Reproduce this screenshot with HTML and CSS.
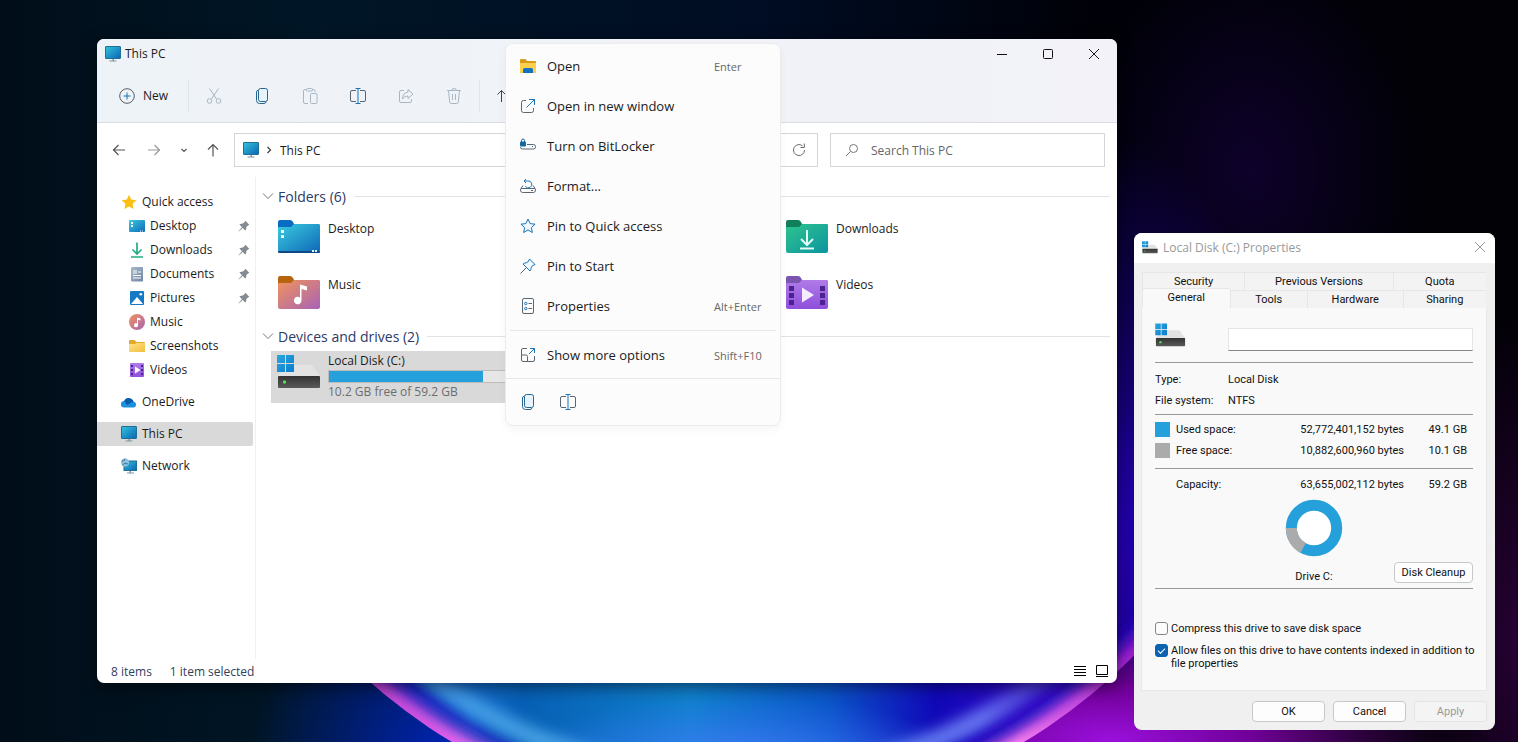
FILE: index.html
```html
<!DOCTYPE html>
<html lang="en">
<head>
    <meta charset="UTF-8">
    <meta name="viewport" content="width=device-width, initial-scale=1.0">
    <title>This PC</title>
    <link rel="stylesheet" href="styles.css">
</head>
<body>
    <!-- Shared icons and gradients -->
    <svg class="defs" width="0" height="0" aria-hidden="true">
        <defs>
            <linearGradient id="g-screen" x1="0" y1="0" x2="1" y2="1"><stop offset="0" stop-color="#33c5dc"/><stop offset="1" stop-color="#0a63b5"/></linearGradient>
            <linearGradient id="g-desktop" x1="0" y1="0" x2="1" y2="1"><stop offset="0" stop-color="#3ccbe0"/><stop offset="1" stop-color="#0d68b8"/></linearGradient>
            <linearGradient id="g-music" x1="0" y1="0" x2="1" y2="1"><stop offset="0" stop-color="#f2935c"/><stop offset="1" stop-color="#a763b5"/></linearGradient>
            <linearGradient id="g-down" x1="0" y1="0" x2="1" y2="1"><stop offset="0" stop-color="#2fc48d"/><stop offset="1" stop-color="#0b94a0"/></linearGradient>
            <linearGradient id="g-video" x1="0" y1="0" x2="0" y2="1"><stop offset="0" stop-color="#b07be8"/><stop offset="1" stop-color="#8f4fdb"/></linearGradient>
            <linearGradient id="g-doc" x1="0" y1="0" x2="1" y2="1"><stop offset="0" stop-color="#a9b9cc"/><stop offset="1" stop-color="#6f86a3"/></linearGradient>
            <linearGradient id="g-folder" x1="0" y1="0" x2="1" y2="1"><stop offset="0" stop-color="#ffe38a"/><stop offset="1" stop-color="#f2bf3c"/></linearGradient>
            <linearGradient id="g-win" x1="0" y1="0" x2="1" y2="1"><stop offset="0" stop-color="#2ba7df"/><stop offset="1" stop-color="#0d7ccb"/></linearGradient>
            <linearGradient id="g-disk" x1="0" y1="0" x2="0" y2="1"><stop offset="0" stop-color="#333"/><stop offset="1" stop-color="#5a5a5a"/></linearGradient>
            <symbol id="i-pc" viewBox="0 0 16 16">
                <rect x="0.5" y="0.5" width="15" height="12" rx="0.5" fill="url(#g-screen)" stroke="#1f6f96"/>
                <path d="M7.5 13h1.500v1.500h-1.500zM4.500 14.500h7v1h-7z" fill="#8296a3"/>
            </symbol>
            <symbol id="i-copy" viewBox="0 0 16 16">
                <rect x="4.500" y="0.500" width="9" height="13" rx="2" fill="#e6f4fd" stroke="#27658f"/>
                <path d="M4 2.200Q2.500 2.700 2.500 4v8.500q0 3 3 3H10q1.500 0 2-1.500" fill="none" stroke="#27658f"/>
            </symbol>
            <symbol id="i-rename" viewBox="0 0 16 16">
                <path d="M6 2.500H2q-1.500 0-1.500 1.500v8q0 1.500 1.500 1.500h4M10 2.500h4q1.500 0 1.500 1.500v8q0 1.500-1.500 1.500h-4" fill="none" stroke="#596673"/>
                <path d="M8 .5v15M5.500.5h5M5.500 15.500h5" fill="none" stroke="#1873b8"/>
            </symbol>
            <symbol id="i-pin" viewBox="0 0 12 12">
                <path d="M7.300.8l4 4-1.300.6-1.600 1.700-.3 2.700-.9.600L4.800 8 .8 11.500.5 11.200 4 7.200 1.600 4.800l.6-.9 2.700-.3L6.600 2z" fill="#858b93"/>
            </symbol>
            <symbol id="i-disk" viewBox="0 0 44 36">
                <path d="M17 12h18l8 11H1l3-4h13z" fill="#e3e3e3"/>
                <rect x="1" y="23" width="42" height="12" rx="1" fill="url(#g-disk)"/>
                <circle cx="7.500" cy="29" r="1.700" fill="#4fe04f"/>
                <path d="M0 2h8v8H0zM9 2h8v8H9zM0 11h8v8H0zM9 11h8v8H9z" fill="url(#g-win)"/>
            </symbol>
            <symbol id="i-close" viewBox="0 0 12 12">
                <path d="M1 1l10 10M11 1L1 11" fill="none" stroke="currentColor"/>
            </symbol>
        </defs>
    </svg>

    <!-- Wallpaper -->
    <svg class="wallpaper" viewBox="0 0 1518 742" preserveAspectRatio="xMidYMid slice" aria-hidden="true">
        <defs>
            <linearGradient id="w-base"><stop offset="0" stop-color="#010e19"/><stop offset="0.2" stop-color="#001626"/><stop offset="0.5" stop-color="#000d24"/><stop offset="0.72" stop-color="#000108"/><stop offset="1" stop-color="#020106"/></linearGradient>
            <radialGradient id="w-blue"><stop offset="0" stop-color="#0026c4"/><stop offset="1" stop-color="#0026c4" stop-opacity="0"/></radialGradient>
            <radialGradient id="w-deep"><stop offset="0" stop-color="#2200b0"/><stop offset="1" stop-color="#2200b0" stop-opacity="0"/></radialGradient>
            <radialGradient id="w-violet"><stop offset="0" stop-color="#220060" stop-opacity="0.4"/><stop offset="1" stop-color="#220060" stop-opacity="0"/></radialGradient>
            <radialGradient id="w-plum"><stop offset="0" stop-color="#300040" stop-opacity="0.8"/><stop offset="1" stop-color="#300040" stop-opacity="0"/></radialGradient>
            <radialGradient id="w-purple"><stop offset="0" stop-color="#9a10dc"/><stop offset="0.4" stop-color="#700098"/><stop offset="1" stop-color="#400050" stop-opacity="0"/></radialGradient>
            <linearGradient id="w-orb" gradientUnits="userSpaceOnUse" x1="371" y1="0" x2="1134" y2="0"><stop offset="0" stop-color="#1018b0"/><stop offset="0.13" stop-color="#1468c8"/><stop offset="0.2" stop-color="#065fb4"/><stop offset="0.42" stop-color="#1080cc"/><stop offset="0.6" stop-color="#0a55c8"/><stop offset="0.74" stop-color="#1008b8"/><stop offset="0.9" stop-color="#3a0ac8"/><stop offset="1" stop-color="#2200a8"/></linearGradient>
            <linearGradient id="w-ring" gradientUnits="userSpaceOnUse" x1="371" y1="0" x2="1134" y2="0"><stop offset="0" stop-color="#c040d0"/><stop offset="0.12" stop-color="#f062f0"/><stop offset="0.85" stop-color="#ff80f0"/><stop offset="1" stop-color="#a01cd0"/></linearGradient>
            <linearGradient id="w-streak" gradientUnits="userSpaceOnUse" x1="371" y1="0" x2="1134" y2="0"><stop offset="0" stop-color="#40a0e8" stop-opacity="0.8"/><stop offset="0.25" stop-color="#58b0f0" stop-opacity="0.8"/><stop offset="0.8" stop-color="#7a90ff" stop-opacity="0.8"/><stop offset="1" stop-color="#2200a8" stop-opacity="0"/></linearGradient>
            <radialGradient id="w-glow"><stop offset="0" stop-color="#4f80ff"/><stop offset="1" stop-color="#3a78ff" stop-opacity="0"/></radialGradient>
            <linearGradient id="w-fade" x1="0" y1="0" x2="0" y2="1"><stop offset="0.55" stop-color="#000"/><stop offset="0.88" stop-color="#fff"/></linearGradient>
            <mask id="w-mask"><rect width="1518" height="742" fill="url(#w-fade)"/></mask>
            <clipPath id="w-clip"><circle cx="738" cy="264" r="557"/></clipPath>
            <filter id="w-blur"><feGaussianBlur stdDeviation="7"/></filter>
        </defs>
        <rect width="1518" height="742" fill="url(#w-base)"/>
        <ellipse cx="460" cy="770" rx="210" ry="210" fill="url(#w-blue)"/>
        <ellipse cx="1250" cy="170" rx="170" ry="220" fill="url(#w-violet)"/>
        <ellipse cx="1120" cy="540" rx="170" ry="400" fill="url(#w-deep)"/>
        <ellipse cx="1518" cy="640" rx="90" ry="330" fill="url(#w-plum)"/>
        <ellipse cx="1110" cy="740" rx="360" ry="130" fill="url(#w-purple)"/>
        <g mask="url(#w-mask)">
            <g clip-path="url(#w-clip)">
                <rect width="1518" height="742" fill="url(#w-orb)"/>
                <ellipse cx="740" cy="775" rx="240" ry="80" fill="url(#w-glow)"/>
                <circle cx="738" cy="264" r="516" fill="none" stroke="url(#w-streak)" stroke-width="20" filter="url(#w-blur)"/>
                <circle cx="738" cy="264" r="539" fill="none" stroke="#1a08c0" stroke-width="10" filter="url(#w-blur)"/>
                <circle cx="738" cy="264" r="558" fill="none" stroke="url(#w-ring)" stroke-width="26" filter="url(#w-blur)"/>
            </g>
        </g>
    </svg>

    <!-- File Explorer -->
    <main class="explorer">
        <header class="titlebar">
            <svg class="icon16"><use href="#i-pc"/></svg>
            <h1>This PC</h1>
            <div class="window-controls">
                <button aria-label="Minimize"><svg viewBox="0 0 12 12"><path d="M1 6.500h10" fill="none" stroke="#111"/></svg></button>
                <button aria-label="Maximize"><svg viewBox="0 0 12 12"><rect x="1.500" y="1.500" width="9" height="9" rx="1" fill="none" stroke="#111"/></svg></button>
                <button aria-label="Close"><svg><use href="#i-close"/></svg></button>
            </div>
        </header>

        <div class="toolbar">
            <button class="new-btn">
                <svg class="icon16" viewBox="0 0 16 16"><circle cx="8" cy="8" r="7.300" fill="none" stroke="#555c63"/><path d="M8 4.500v7M4.500 8h7" fill="none" stroke="#1873b8"/></svg>
                New
            </button>
            <span class="divider"></span>
            <button class="tool" aria-label="Cut" disabled><svg viewBox="0 0 16 16"><g fill="none" stroke="#a9b6c4"><path d="M3.500.5l7 10.500M12.500.5l-7 10.500"/><circle cx="3.500" cy="13" r="2.300"/><circle cx="12.500" cy="13" r="2.300"/></g></svg></button>
            <button class="tool" aria-label="Copy"><svg><use href="#i-copy"/></svg></button>
            <button class="tool" aria-label="Paste" disabled><svg viewBox="0 0 16 16"><g fill="none" stroke="#a9b6c4"><path d="M5 1.500H3Q1.500 1.500 1.500 3v11q0 1.500 1.500 1.500h3M10 1.500h1.500Q13 1.500 13 3v1"/><rect x="4.500" y=".5" width="6" height="2.500" rx="1"/><rect x="8.500" y="5.500" width="6.500" height="10" rx="1"/></g></svg></button>
            <button class="tool" aria-label="Rename"><svg><use href="#i-rename"/></svg></button>
            <button class="tool" aria-label="Share" disabled><svg viewBox="0 0 16 16"><g fill="none" stroke="#a9b6c4"><path d="M6 2.500H3Q1.500 2.500 1.500 4v9q0 1.500 1.500 1.500h9q1.500 0 1.500-1.500v-2"/><path d="M10 1.500l5 4.500-5 4.500V8Q6.500 7.500 4.500 11q0-6 5.500-7z"/></g></svg></button>
            <button class="tool" aria-label="Delete" disabled><svg viewBox="0 0 16 16"><g fill="none" stroke="#a9b6c4"><path d="M1 2.500h14M5.500 2.500Q5.500.5 8 .5t2.500 2M2.500 2.500l1.200 11.500q.2 1.500 1.600 1.500h5.400q1.400 0 1.600-1.500l1.200-11.500M6.500 6v6M9.500 6v6"/></g></svg></button>
            <span class="divider"></span>
            <button class="tool" aria-label="Sort"><svg viewBox="0 0 16 16"><path d="M4.500 14V2.500M.5 6.500l4-4 4 4" fill="none" stroke="#444"/></svg></button>
        </div>

        <div class="address-row">
            <nav class="nav-buttons" aria-label="History">
                <button aria-label="Back"><svg viewBox="0 0 14 14"><path d="M13 7H1.500M6.500 2l-5 5 5 5" fill="none" stroke="#555" stroke-width="1.200"/></svg></button>
                <button aria-label="Forward"><svg viewBox="0 0 14 14"><path d="M1 7h11.500M7.500 2l5 5-5 5" fill="none" stroke="#9a9a9a" stroke-width="1.200"/></svg></button>
                <button class="recent" aria-label="Recent locations"><svg viewBox="0 0 14 14"><path d="M4.500 6L7 8.500 9.500 6" fill="none" stroke="#555" stroke-width="1.200"/></svg></button>
                <button class="up" aria-label="Up"><svg viewBox="0 0 14 14"><path d="M7 13.500V1.500M2 6.500l5-5 5 5" fill="none" stroke="#555" stroke-width="1.200"/></svg></button>
            </nav>
            <div class="address">
                <svg class="icon16"><use href="#i-pc"/></svg>
                <svg class="crumb" viewBox="0 0 8 8"><path d="M2.500 1l3 3-3 3" fill="none" stroke="#444" stroke-width="1.300"/></svg>
                <span>This PC</span>
                <button aria-label="Refresh"><svg viewBox="0 0 14 14"><path d="M12.500 7A5.500 5.500 0 1 1 10.500 2.800M12.300.5v4H8.500" fill="none" stroke="#6b6b6b"/></svg></button>
            </div>
            <div class="search">
                <svg viewBox="0 0 14 14"><circle cx="8.500" cy="5.500" r="4" fill="none" stroke="#777"/><path d="M5.500 8.500L1 13" stroke="#777"/></svg>
                <input type="search" placeholder="Search This PC" aria-label="Search This PC">
            </div>
        </div>

        <div class="panes">
            <nav class="sidebar" aria-label="Folders">
                <a href="#" class="row">
                    <svg class="icon16" viewBox="0 0 16 16"><path d="M8 .8l2.200 4.700 5.100.7-3.700 3.600.9 5.100L8 12.400l-4.500 2.500.9-5.100L.7 6.200l5.100-.7z" fill="#fcbf12"/></svg>
                    Quick access
                </a>
                <a href="#" class="row sub">
                    <svg class="icon16" viewBox="0 0 16 16"><rect y="2" width="16" height="12" rx="1" fill="url(#g-desktop)"/><path d="M2 4h2v2H2zM2 7h2v2H2zM11 12.500h1v1h-1zM13 12.500h1v1h-1z" fill="#fff"/></svg>
                    Desktop <svg class="pin"><use href="#i-pin"/></svg>
                </a>
                <a href="#" class="row sub">
                    <svg class="icon16" viewBox="0 0 16 16"><path d="M8 .5v11M3.500 7.500L8 12l4.500-4.500M2 15h12" fill="none" stroke="#22ad83" stroke-width="1.700"/></svg>
                    Downloads <svg class="pin"><use href="#i-pin"/></svg>
                </a>
                <a href="#" class="row sub">
                    <svg class="icon16" viewBox="0 0 16 16"><rect x="2" y="1" width="12" height="14.500" rx="1" fill="url(#g-doc)"/><path d="M4 5h4M4 7h4M4 9.500h8M4 12h8M9 6h3" stroke="#fff"/></svg>
                    Documents <svg class="pin"><use href="#i-pin"/></svg>
                </a>
                <a href="#" class="row sub">
                    <svg class="icon16" viewBox="0 0 16 16"><rect x="1" y="1" width="14" height="14" rx="1" fill="#1679c4"/><path d="M2 14l6-7 6 7z" fill="#fff"/><circle cx="11.800" cy="4.200" r="1.300" fill="#fff"/></svg>
                    Pictures <svg class="pin"><use href="#i-pin"/></svg>
                </a>
                <a href="#" class="row sub">
                    <svg class="icon16" viewBox="0 0 16 16"><circle cx="8" cy="8" r="8" fill="url(#g-music)"/><path d="M8 11V3.500l3.500 1v2L9 5.800V11a2 2 0 1 1-1-1.500z" fill="#fff"/></svg>
                    Music
                </a>
                <a href="#" class="row sub">
                    <svg class="icon16" viewBox="0 0 16 16"><path d="M0 3q0-1 1-1h4.500l2 2H15q1 0 1 1v8q0 1-1 1H1q-1 0-1-1z" fill="#e3a92c"/><path d="M0 6h6l1.500-1H16v8q0 1-1 1H1q-1 0-1-1z" fill="url(#g-folder)"/></svg>
                    Screenshots
                </a>
                <a href="#" class="row sub">
                    <svg class="icon16" viewBox="0 0 16 16"><rect x="1" y="1" width="14" height="14" rx="1" fill="url(#g-video)"/><path d="M2 3h2v2H2zM2 7h2v2H2zM2 11h2v2H2zM12 3h2v2h-2zM12 7h2v2h-2zM12 11h2v2h-2z" fill="#4b2391"/><path d="M6 4.500v7L11.500 8z" fill="#fff"/></svg>
                    Videos
                </a>
                <a href="#" class="row top">
                    <svg class="icon16" viewBox="0 0 16 16"><path d="M3 13.500a3.200 3.200 0 0 1 .2-6.400 5 5 0 0 1 9.300.4A3.100 3.100 0 0 1 13 13.500z" fill="#1f8fe0"/><path d="M3.200 7.100a5 5 0 0 1 9.300.4L6 11z" fill="#0b5cab"/></svg>
                    OneDrive
                </a>
                <a href="#" class="row top selected">
                    <svg class="icon16"><use href="#i-pc"/></svg>
                    This PC
                </a>
                <a href="#" class="row top">
                    <svg class="icon16" viewBox="0 0 16 16"><rect x="3" y="3" width="12.500" height="9.500" fill="url(#g-screen)" stroke="#1f6f96"/><path d="M8.500 13h1.500v1.500H8.500zM6 14.500h7v1H6z" fill="#8296a3"/><circle cx="4" cy="4.500" r="4" fill="#8fc0dd"/><path d="M1 3q2 1 3-2.500M1.500 7q2-3 5.500-1" fill="none" stroke="#37799f"/></svg>
                    Network
                </a>
            </nav>

            <section class="content">
                <h2>
                    <svg viewBox="0 0 12 12"><path d="M1 3.500l5 5 5-5" fill="none" stroke="#777"/></svg>
                    Folders (6)
                </h2>
                <div class="tiles">
                    <a href="#" class="tile">
                        <svg viewBox="0 0 44 36"><path d="M1 3q0-2 2-2h10q2 0 3 2l1 2h24q2 0 2 2v8H1z" fill="#0a6cc0"/><path d="M1 9q0-1 1-1h12l3-3h24q2 0 2 2v24q0 2-2 2H3q-2 0-2-2z" fill="url(#g-desktop)"/><path d="M1 32h42v1q0 1-1 1H2q-1 0-1-1z" fill="#0b4a86"/><path d="M4 11h3v3H4zM4 16h3v3H4zM35 31h2v2h-2zM38 31h2v2h-2z" fill="#e8fbff"/></svg>
                        Desktop
                    </a>
                    <a href="#" class="tile third">
                        <svg viewBox="0 0 44 36"><path d="M1 3q0-2 2-2h10q2 0 3 2l1 2h24q2 0 2 2v8H1z" fill="#0f7f5c"/><path d="M1 9q0-1 1-1h12l3-3h24q2 0 2 2v25q0 2-2 2H3q-2 0-2-2z" fill="url(#g-down)"/><path d="M22 11v14M16 20l6 6 6-6M15 29.500h14" fill="none" stroke="#dffcf4" stroke-width="2"/></svg>
                        Downloads
                    </a>
                    <a href="#" class="tile">
                        <svg viewBox="0 0 44 36"><path d="M1 3q0-2 2-2h10q2 0 3 2l1 2h24q2 0 2 2v8H1z" fill="#b8640f"/><path d="M1 9q0-1 1-1h12l3-3h24q2 0 2 2v25q0 2-2 2H3q-2 0-2-2z" fill="url(#g-music)"/><path d="M23 25V9.500l7 2v4l-5.500-1.500V25.500a3.800 3.800 0 1 1-1.500-3z" fill="#fff"/></svg>
                        Music
                    </a>
                    <a href="#" class="tile third">
                        <svg viewBox="0 0 44 36"><path d="M1 3q0-2 2-2h10q2 0 3 2l1 2h24q2 0 2 2v8H1z" fill="#7a56b0"/><path d="M1 9q0-1 1-1h12l3-3h24q2 0 2 2v25q0 2-2 2H3q-2 0-2-2z" fill="url(#g-video)"/><path d="M4 11h5v5H4zM4 18h5v5H4zM4 25h5v5H4zM35 11h5v5h-5zM35 18h5v5h-5zM35 25h5v5h-5z" fill="#4b2391"/><path d="M17 12.500v15L29 20z" fill="#f5edff"/></svg>
                        Videos
                    </a>
                </div>
                <h2>
                    <svg viewBox="0 0 12 12"><path d="M1 3.500l5 5 5-5" fill="none" stroke="#777"/></svg>
                    Devices and drives (2)
                </h2>
                <div class="tiles">
                    <a href="#" class="tile drive">
                        <svg><use href="#i-disk"/></svg>
                        <span class="drive-info">
                            <span>Local Disk (C:)</span>
                            <span class="usage"><span class="used" style="width: 83%"></span></span>
                            <span class="free">10.2 GB free of 59.2 GB</span>
                        </span>
                    </a>
                </div>
            </section>
        </div>

        <footer class="statusbar">
            <span>8 items</span>
            <span>1 item selected</span>
            <div class="view-buttons">
                <button aria-label="Details view"><svg viewBox="0 0 12 12"><path d="M0 1.500h12M0 4.500h12M0 7.500h12M0 10.500h12" stroke="#000"/></svg></button>
                <button aria-label="Large icons view"><svg viewBox="0 0 12 12"><path d="M.5.500h11v9H.500zM0 11.500h12" fill="none" stroke="#000"/></svg></button>
            </div>
        </footer>
    </main>

    <!-- Context menu -->
    <div class="menu" role="menu">
        <button class="item" role="menuitem">
            <svg viewBox="0 0 16 16"><path d="M0 2q0-1 1-1h4.500L7 3h8q1 0 1 1v10q0 1-1 1H1q-1 0-1-1z" fill="#d99b1c"/><path d="M0 5h16v9q0 1-1 1H1q-1 0-1-1z" fill="#fccf4d"/><path d="M3 15v-3.500q0-1.500 1.500-1.500h7q1.500 0 1.500 1.500V15z" fill="#1672c0"/></svg>
            <span>Open</span> <kbd>Enter</kbd>
        </button>
        <button class="item" role="menuitem">
            <svg viewBox="0 0 16 16"><path d="M6 2.500H3.500q-2 0-2 2v8q0 2 2 2h8q2 0 2-2V10" fill="none" stroke="#596673"/><path d="M9 1.500h5.500V7M14.500 1.500l-8 8" fill="none" stroke="#1873b8"/></svg>
            <span>Open in new window</span>
        </button>
        <button class="item" role="menuitem">
            <svg viewBox="0 0 16 16"><path d="M7 6.500h6.500q2 0 2 2v.500q0 2-2 2h-11q-2 0-2-2" fill="none" stroke="#596673"/><path d="M1.500 4V2.500a1.500 1.500 0 0 1 3 0V4" fill="none" stroke="#14699f"/><rect x="0" y="3.500" width="6" height="5" rx="1" fill="#14699f"/><path d="M12 8.500h1" stroke="#14699f"/></svg>
            <span>Turn on BitLocker</span>
        </button>
        <button class="item" role="menuitem">
            <svg viewBox="0 0 16 16"><path d="M3 7.500L1 10.500q-.5.500-.5 1.500 0 2.500 2 2.500h11q2 0 2-2.500 0-1-.5-1.500l-2-3M1 10.500h14M11 12.500h2" fill="none" stroke="#596673"/><path d="M5.500 8.500a3.500 3.500 0 1 0 2-5.500H4M6 1L4 3l2 2" fill="none" stroke="#1873b8"/></svg>
            <span>Format...</span>
        </button>
        <button class="item" role="menuitem">
            <svg viewBox="0 0 16 16"><path d="M8 1l2.100 4.600 5 .6-3.700 3.400 1 4.900L8 12l-4.400 2.500 1-4.900L.9 6.200l5-.6z" fill="#f1f9ff" stroke="#1873b8" stroke-linejoin="round"/></svg>
            <span>Pin to Quick access</span>
        </button>
        <button class="item" role="menuitem">
            <svg viewBox="0 0 16 16"><path d="M9.500 1l5.500 5.500q-3.500 1-3.800 3.300-.2 2-1.200 3.200L3 6q1.200-1 3.200-1.200Q8.500 4.500 9.500 1z" fill="#f1f9ff" stroke="#1873b8" stroke-linejoin="round"/><path d="M6 10L.5 15.500" stroke="#596673"/></svg>
            <span>Pin to Start</span>
        </button>
        <button class="item" role="menuitem">
            <svg viewBox="0 0 16 16"><rect x="2.500" y=".5" width="11" height="15" rx="1.500" fill="none" stroke="#596673"/><path d="M8.500 5.500H12M8.500 10.500H12" stroke="#596673"/><circle cx="5.800" cy="5.500" r="1.200" fill="none" stroke="#1873b8"/><circle cx="5.800" cy="10.500" r="1.200" fill="none" stroke="#1873b8"/></svg>
            <span>Properties</span> <kbd>Alt+Enter</kbd>
        </button>
        <hr>
        <button class="item" role="menuitem">
            <svg viewBox="0 0 16 16"><path d="M7 1.500H3q-1.500 0-1.500 1.500v10q0 1.500 1.500 1.500h10q1.500 0 1.500-1.500V9M1.500 8H6q1.500 0 1.500 1.500v5" fill="none" stroke="#596673"/><path d="M10 1.500h4.500V6M14.500 1.500L9 7" fill="none" stroke="#1873b8"/></svg>
            <span>Show more options</span> <kbd>Shift+F10</kbd>
        </button>
        <div class="quick-actions">
            <button aria-label="Copy"><svg><use href="#i-copy"/></svg></button>
            <button aria-label="Rename"><svg><use href="#i-rename"/></svg></button>
        </div>
    </div>

    <!-- Disk properties -->
    <form class="dialog">
        <header>
            <svg><use href="#i-disk"/></svg>
            <h2>Local Disk (C:) Properties</h2>
            <button type="button" aria-label="Close"><svg><use href="#i-close"/></svg></button>
        </header>
        <div class="tabs back">
            <button type="button">Security</button>
            <button type="button">Previous Versions</button>
            <button type="button">Quota</button>
        </div>
        <div class="tabs front">
            <button type="button" class="active">General</button>
            <button type="button">Tools</button>
            <button type="button">Hardware</button>
            <button type="button">Sharing</button>
        </div>
        <div class="general">
            <div class="volume">
                <svg><use href="#i-disk"/></svg>
                <input type="text" aria-label="Volume label">
            </div>
            <dl class="facts">
                <dt>Type:</dt><dd>Local Disk</dd>
                <dt>File system:</dt><dd>NTFS</dd>
            </dl>
            <table class="space">
                <tbody>
                    <tr><td class="key"><i class="swatch blue"></i></td><th>Used space:</th><td>52,772,401,152 bytes</td><td class="gb">49.1 GB</td></tr>
                    <tr><td class="key"><i class="swatch gray"></i></td><th>Free space:</th><td>10,882,600,960 bytes</td><td class="gb">10.1 GB</td></tr>
                </tbody>
                <tfoot>
                    <tr><td class="key"></td><th>Capacity:</th><td>63,655,002,112 bytes</td><td class="gb">59.2 GB</td></tr>
                </tfoot>
            </table>
            <div class="chart">
                <svg class="donut" viewBox="0 0 58 58">
                    <circle cx="29" cy="29" r="17.500" fill="#fff"/>
                    <circle cx="29" cy="29" r="22.700" fill="none" stroke="#26a0da" stroke-width="11"/>
                    <circle cx="29" cy="29" r="22.700" fill="none" stroke="#ababab" stroke-width="11" pathLength="100" stroke-dasharray="17 83" stroke-dashoffset="-33"/>
                </svg>
                <span>Drive C:</span>
                <button type="button">Disk Cleanup</button>
            </div>
            <div class="options">
                <label><input type="checkbox"> <span>Compress this drive to save disk space</span></label>
                <label><input type="checkbox" checked> <span>Allow files on this drive to have contents indexed in addition to file properties</span></label>
            </div>
        </div>
        <footer>
            <button type="button">OK</button>
            <button type="button">Cancel</button>
            <button type="button" disabled>Apply</button>
        </footer>
    </form>
</body>
</html>
```

FILE: styles.css
```css
/* General Styles */
* {
    margin: 0;
    padding: 0;
    box-sizing: border-box;
}

body {
    position: relative;
    min-height: 100vh;
    overflow: hidden;
    background: #00060f;
    font-family: "Open Sans", "Noto Sans", sans-serif;
    font-size: 12px;
    color: #1b1b1b;
}

button,
input {
    font: inherit;
    color: inherit;
    border: none;
    background: none;
}

a {
    color: inherit;
    text-decoration: none;
}

svg {
    display: block;
    flex: none;
}

.defs {
    position: absolute;
}

.wallpaper {
    position: absolute;
    inset: 0;
    width: 100%;
    height: 100%;
}

.icon16 {
    width: 16px;
    height: 16px;
}

/* Explorer window */
.explorer {
    position: absolute;
    top: 39px;
    left: 97px;
    right: 401px;
    bottom: 59px;
    display: flex;
    flex-direction: column;
    overflow: hidden;
    border-radius: 7px;
    background: #fff;
    box-shadow: 0 4px 16px rgba(0, 0, 0, 0.5);
}

.titlebar {
    display: flex;
    align-items: center;
    gap: 4px;
    height: 29px;
    padding-left: 8px;
    background: linear-gradient(90deg, #eef3f7, #f2f2f8);
}

.titlebar h1 {
    font-size: 12px;
    font-weight: 400;
}

.window-controls {
    display: flex;
    margin-left: auto;
}

.window-controls button {
    display: grid;
    place-items: center;
    width: 46px;
    height: 29px;
}

.window-controls svg {
    width: 12px;
    height: 12px;
}

.toolbar {
    display: flex;
    align-items: center;
    height: 55px;
    padding: 1px 0 0 16px;
    border-bottom: 1px solid #d9dde0;
    background: linear-gradient(90deg, #eef3f7, #f2f2f8);
}

.new-btn {
    display: flex;
    align-items: center;
    gap: 8px;
    width: 74px;
    padding-left: 6px;
}

.divider {
    width: 1px;
    height: 32px;
    margin: 0 1px;
    background: #e1e5e9;
}

.tool {
    display: grid;
    place-items: center;
    width: 48px;
    height: 32px;
}

.tool svg {
    width: 16px;
    height: 16px;
}

.address-row {
    display: flex;
    gap: 12px;
    padding: 10px 12px;
}

.nav-buttons {
    display: flex;
    width: 113px;
}

.nav-buttons button {
    display: grid;
    flex: none;
    place-items: center;
    width: 35px;
    margin-left: -8px;
}

.nav-buttons button + button {
    margin-left: 0;
}

.nav-buttons .recent {
    width: 26px;
}

.nav-buttons .up {
    width: 32px;
}

.nav-buttons svg {
    width: 14px;
    height: 14px;
}

.address,
.search {
    display: flex;
    align-items: center;
    height: 34px;
    border: 1px solid #d5d5d5;
}

.address {
    flex: 1;
    gap: 6px;
    padding-left: 8px;
}

.crumb {
    width: 8px;
    height: 8px;
}

.address span {
    flex: 1;
    padding-left: 1px;
}

.address button {
    display: grid;
    place-items: center;
    width: 36px;
    height: 32px;
}

.address button svg,
.search svg {
    width: 14px;
    height: 14px;
}

.search {
    width: 275px;
    gap: 12px;
    padding-left: 14px;
}

.search input {
    flex: 1;
    outline: none;
}

.search input::placeholder {
    color: #666;
}

.panes {
    display: flex;
    flex: 1;
    min-height: 0;
}

/* Sidebar */
.sidebar {
    width: 159px;
    padding: 13px 2px 0 0;
    border-right: 1px solid #f0f0f0;
}

.row {
    display: flex;
    align-items: center;
    gap: 5px;
    height: 24px;
    padding: 0 3px 1px 24px;
}

.row.sub {
    padding-left: 32px;
}

.row.top {
    margin-top: 8px;
}

.row.selected {
    background: #d9d9d9;
    border-radius: 0 2px 2px 0;
}

.pin {
    width: 12px;
    height: 12px;
    margin-left: auto;
}

/* Folder and drive tiles */
.content {
    flex: 1;
    padding: 6px 7px 0 6px;
}

.content h2 {
    display: flex;
    align-items: center;
    gap: 4px;
    height: 26px;
    font-size: 14px;
    font-weight: 400;
    color: #2b3a67;
}

.content h2 svg {
    width: 12px;
    height: 12px;
}

.content h2::after {
    content: "";
    flex: 1;
    height: 1px;
    margin-left: 4px;
    background: #e2e2e2;
}

.tiles {
    display: grid;
    grid-template-columns: repeat(auto-fill, 250px);
    gap: 4px;
    padding: 2px 0 4px 9px;
}

.tile {
    display: flex;
    gap: 7px;
    height: 52px;
    padding: 8px 6px;
    line-height: 20px;
}

.tile svg {
    width: 44px;
    height: 36px;
}

.tile.third {
    grid-column: 3;
}

.tile.drive {
    padding: 2px 6px;
    background: #d9d9d9;
}

.drive-info {
    flex: 1;
    line-height: 16px;
}

.drive-info span {
    display: block;
}

.drive-info .usage {
    height: 13px;
    margin: 1px 0;
    border: 1px solid #bcbcbc;
    background: #e6e6e6;
}

.drive-info .used {
    height: 11px;
    background: #26a0da;
}

.drive-info .free {
    color: #6d6d6d;
}

.statusbar {
    display: flex;
    align-items: center;
    gap: 18px;
    height: 24px;
    padding: 0 9px 0 14px;
    color: #33415c;
}

.view-buttons {
    display: flex;
    gap: 10px;
    margin-left: auto;
}

.view-buttons svg {
    width: 12px;
    height: 12px;
}

/* Context menu */
.menu {
    position: absolute;
    top: 43px;
    left: 505px;
    width: 276px;
    padding-top: 2px;
    border: 1px solid #ececec;
    border-radius: 8px;
    background: #fcfcfc;
    box-shadow: 0 4px 8px rgba(0, 0, 0, 0.04);
}

.item {
    display: grid;
    grid-template-columns: 16px 156px 1fr;
    column-gap: 11px;
    align-items: center;
    width: 100%;
    height: 40px;
    padding-left: 14px;
    font-size: 13px;
    text-align: left;
}

.item svg,
.quick-actions svg {
    width: 16px;
    height: 16px;
}

.item kbd {
    font-family: inherit;
    font-size: 11px;
    color: #666;
}

.menu hr {
    margin: 4px;
    border: none;
    border-top: 1px solid #e8e8e8;
}

.quick-actions {
    display: flex;
    gap: 24px;
    margin-top: 3px;
    padding: 15px 14px;
    border-top: 1px solid #e8e8e8;
}

/* Properties dialog */
.dialog {
    position: absolute;
    right: 23px;
    bottom: 12px;
    width: 361px;
    overflow: hidden;
    border-radius: 8px;
    background: #f0f0f0;
    font-family: Roboto, "Liberation Sans", sans-serif;
    font-size: 11px;
    color: #111;
}

.dialog header {
    display: flex;
    align-items: center;
    gap: 5px;
    height: 30px;
    padding: 0 9px 2px 8px;
    background: #fff;
    color: #999;
}

.dialog header h2 {
    flex: 1;
    font-family: "Open Sans", "Noto Sans", sans-serif;
    font-size: 12px;
    font-weight: 400;
}

.dialog header svg {
    width: 16px;
    height: 14px;
}

.dialog header button svg {
    width: 12px;
    height: 12px;
}

.tabs {
    display: grid;
    margin: 0 9px 0 8px;
}

.tabs button {
    height: 18px;
    border: 1px solid #e6e6e6;
    border-width: 1px 0 0 1px;
    background: #f3f3f3;
}

.tabs.back {
    grid-template-columns: 102fr 148fr 93fr;
    margin-top: 9px;
}

.tabs.front {
    grid-template-columns: 87fr 77fr 95fr 83fr;
}

.tabs .active {
    height: 20px;
    margin-top: -2px;
    padding-bottom: 2px;
    background: #f9f9f9;
}

.general {
    margin: 0 8px 0 7px;
    padding: 14px 13px 20px;
    border: 1px solid #e8e8e8;
    border-top: none;
    background: #f9f9f9;
}

.volume {
    display: flex;
    justify-content: space-between;
    padding-bottom: 11px;
    border-bottom: 1px solid #999;
}

.volume svg {
    width: 31px;
    height: 25px;
}

.volume input {
    width: 245px;
    height: 23px;
    margin-top: 6px;
    padding: 0 4px;
    border: 1px solid #e5e5e5;
    border-bottom-color: #868686;
    background: #fff;
}

.facts {
    display: grid;
    grid-template-columns: 73px 1fr;
    padding: 6px 0 3px;
    line-height: 21px;
}

.space {
    width: 100%;
    border-collapse: collapse;
    line-height: 21px;
    text-align: right;
}

.space tbody,
.space tfoot {
    border-top: 1px solid #999;
}

.space tbody tr:first-child td,
.space tbody tr:first-child th {
    padding-top: 4px;
}

.space tbody tr:last-child td,
.space tbody tr:last-child th {
    padding-bottom: 7px;
}

.space th {
    font-weight: 400;
    text-align: left;
}

.space .key {
    width: 21px;
}

.space .gb {
    width: 69px;
    padding-right: 6px;
}

.space tfoot td,
.space tfoot th {
    padding-top: 5px;
}

.swatch {
    display: block;
    width: 15px;
    height: 15px;
}

.swatch.blue {
    background: #26a0da;
}

.swatch.gray {
    background: #ababab;
}

.chart {
    display: grid;
    grid-template-columns: 1fr 78px 1fr;
    justify-items: center;
    align-items: end;
    padding: 4px 0 5px;
    border-bottom: 1px solid #999;
}

.chart .donut {
    grid-column: 2;
    width: 58px;
    height: 58px;
}

.chart span {
    grid-row: 2;
    grid-column: 2;
    line-height: 12px;
}

.chart button {
    grid-row: 2;
    grid-column: 3;
    justify-self: end;
    width: 79px;
    margin-top: 5px;
}

.chart button,
.dialog footer button {
    height: 21px;
    border: 1px solid #c8c8c8;
    border-radius: 4px;
    background: #fdfdfd;
}

.options {
    display: grid;
    gap: 9px;
    margin: 33px -8px 0 0;
}

.options label {
    display: flex;
    align-items: flex-start;
    gap: 3px;
    line-height: 13px;
}

.options input {
    appearance: none;
    flex: none;
    width: 13px;
    height: 13px;
    border: 1px solid #868686;
    border-radius: 3px;
    background: #fcfcfc;
}

.options input:checked {
    display: grid;
    place-items: center;
    border-color: #0a62b0;
    background: #0a62b0;
}

.options input:checked::after {
    content: "";
    width: 6px;
    height: 3px;
    margin-bottom: 2px;
    border: solid #fff;
    border-width: 0 0 1px 1px;
    transform: rotate(-45deg);
}

.dialog footer {
    display: flex;
    justify-content: flex-end;
    gap: 8px;
    padding: 10px 8px 8px;
}

.dialog footer button {
    width: 73px;
}

.dialog footer button:disabled {
    border-color: #e4e4e4;
    background: #f4f4f4;
    color: #9a9a9a;
}
```
